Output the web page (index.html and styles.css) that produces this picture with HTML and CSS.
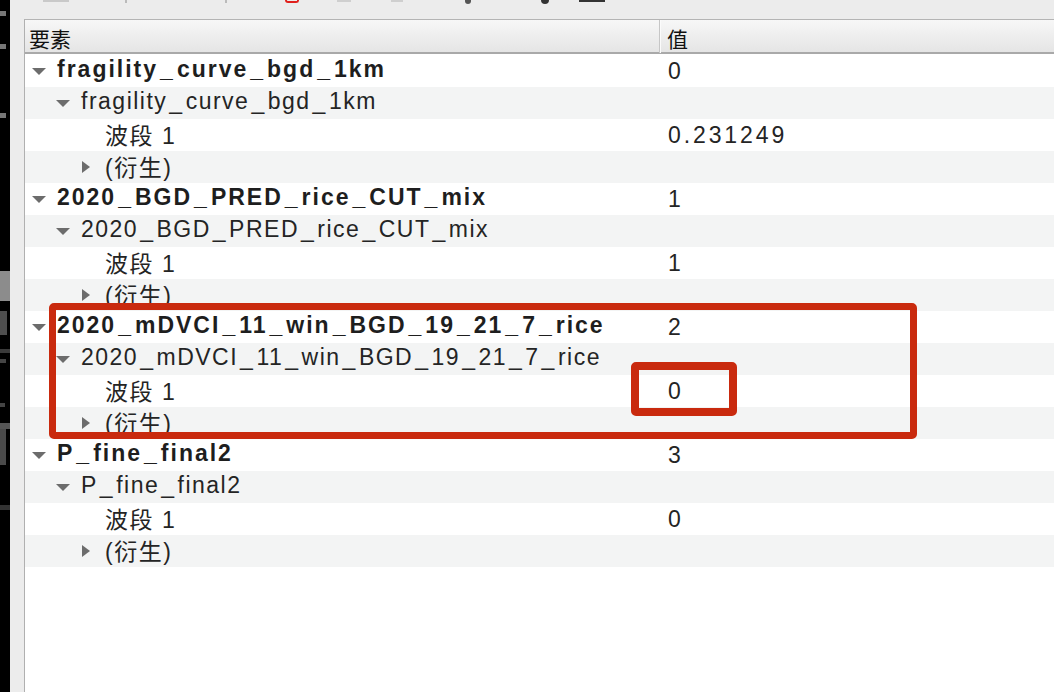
FILE: index.html
```html
<!DOCTYPE html>
<html lang="zh">
<head>
<meta charset="utf-8">
<title>图层信息</title>
<link rel="stylesheet" href="styles.css">
</head>
<body>
<div class="screen">
  <div class="strip">
    <i class="mk m1"></i><i class="mk m2"></i><i class="mk m3"></i><i class="mk m4"></i><i class="mk m5"></i><i class="mk m6"></i><i class="mk m7"></i><i class="mk m8"></i><i class="mk m9"></i><i class="mk m10"></i><i class="mk m11"></i>
  </div>
  <div class="panel">
    <div class="toolbar">
      <i class="stub s1"></i><i class="stub s2"></i><i class="stub s3"></i><i class="stub s4"></i><i class="stub s5"></i><i class="stub s6"></i><i class="stub s7"></i><i class="stub s8"></i><i class="stub s9"></i>
    </div>
    <div class="tree">
      <div class="header">
        <div class="hcell hname">要素</div>
        <div class="hcell hval">值</div>
      </div>
      <div class="rows">
        <div class="row"><div class="name l0"><span class="tg down"></span><span class="lbl b">fragility<span class="us">_</span>curve<span class="us">_</span>bgd<span class="us">_</span>1km</span></div><div class="val">0</div></div>
        <div class="row"><div class="name l1"><span class="tg down"></span><span class="lbl">fragility<span class="us">_</span>curve<span class="us">_</span>bgd<span class="us">_</span>1km</span></div><div class="val"></div></div>
        <div class="row"><div class="name l2"><span class="tg"></span><span class="lbl">波段 1</span></div><div class="val">0.231249</div></div>
        <div class="row"><div class="name l2"><span class="tg right"></span><span class="lbl">(衍生)</span></div><div class="val"></div></div>
        <div class="row"><div class="name l0"><span class="tg down"></span><span class="lbl b">2020<span class="us">_</span>BGD<span class="us">_</span>PRED<span class="us">_</span>rice<span class="us">_</span>CUT<span class="us">_</span>mix</span></div><div class="val">1</div></div>
        <div class="row"><div class="name l1"><span class="tg down"></span><span class="lbl">2020<span class="us">_</span>BGD<span class="us">_</span>PRED<span class="us">_</span>rice<span class="us">_</span>CUT<span class="us">_</span>mix</span></div><div class="val"></div></div>
        <div class="row"><div class="name l2"><span class="tg"></span><span class="lbl">波段 1</span></div><div class="val">1</div></div>
        <div class="row"><div class="name l2"><span class="tg right"></span><span class="lbl">(衍生)</span></div><div class="val"></div></div>
        <div class="row"><div class="name l0"><span class="tg down"></span><span class="lbl b">2020<span class="us">_</span>mDVCI<span class="us">_</span>11<span class="us">_</span>win<span class="us">_</span>BGD<span class="us">_</span>19<span class="us">_</span>21<span class="us">_</span>7<span class="us">_</span>rice</span></div><div class="val">2</div></div>
        <div class="row"><div class="name l1"><span class="tg down"></span><span class="lbl">2020<span class="us">_</span>mDVCI<span class="us">_</span>11<span class="us">_</span>win<span class="us">_</span>BGD<span class="us">_</span>19<span class="us">_</span>21<span class="us">_</span>7<span class="us">_</span>rice</span></div><div class="val"></div></div>
        <div class="row"><div class="name l2"><span class="tg"></span><span class="lbl">波段 1</span></div><div class="val">0</div></div>
        <div class="row"><div class="name l2"><span class="tg right"></span><span class="lbl">(衍生)</span></div><div class="val"></div></div>
        <div class="row"><div class="name l0"><span class="tg down"></span><span class="lbl b">P<span class="us">_</span>fine<span class="us">_</span>final2</span></div><div class="val">3</div></div>
        <div class="row"><div class="name l1"><span class="tg down"></span><span class="lbl">P<span class="us">_</span>fine<span class="us">_</span>final2</span></div><div class="val"></div></div>
        <div class="row"><div class="name l2"><span class="tg"></span><span class="lbl">波段 1</span></div><div class="val">0</div></div>
        <div class="row"><div class="name l2"><span class="tg right"></span><span class="lbl">(衍生)</span></div><div class="val"></div></div>
      </div>
    </div>
  </div>
  <div class="mark-box box-big"></div>
  <div class="mark-box box-small"></div>
</div>
</body>
</html>
```
FILE: styles.css
```css
* { box-sizing: border-box; }
html, body { margin: 0; padding: 0; }
body {
  width: 1054px;
  height: 692px;
  overflow: hidden;
  background: #ececec;
  font-family: "Liberation Sans", "Noto Sans CJK SC", sans-serif;
}
.screen {
  position: relative;
  display: flex;
  width: 1054px;
  height: 692px;
}
.strip {
  width: 10px;
  flex: none;
  background: #000;
  display: flex;
  flex-direction: column;
}
.mk { display: block; background: #666; }
.m1 { margin-top: 11px; width: 6px; height: 5px; background: #777; }
.m2 { margin-top: 28px; width: 6px; height: 5px; background: #777; }
.m3 { margin-top: 64px; width: 6px; height: 5px; background: #777; }
.m4 { margin-top: 153px; width: 10px; height: 30px; background: #8c8c8c; }
.m5 { margin-top: 10px; width: 7px; height: 24px; background: #4e4e4e; }
.m6 { margin-top: 14px; width: 10px; height: 4px; background: #3a3a3a; }
.m7 { margin-top: 6px; width: 6px; height: 4px; background: #444; }
.m8 { margin-top: 40px; width: 5px; height: 4px; background: #444; }
.m9 { margin-top: 16px; width: 10px; height: 6px; background: #555; }
.m10 { margin-top: 0; width: 6px; height: 36px; background: #4a4a4a; }
.m11 { margin-top: 40px; width: 10px; height: 5px; background: #333; }

.panel {
  flex: 1;
  display: flex;
  flex-direction: column;
  padding-left: 14px;
  background: #ececec;
}
.toolbar {
  height: 19px;
  flex: none;
  display: flex;
  align-items: flex-start;
}
.stub { display: block; height: 2px; background: #c9c9c9; }
.s1 { margin-left: 19px; width: 26px; }
.s2 { margin-left: 56px; width: 2px; height: 3px; background: #bbb; }
.s3 { margin-left: 98px; width: 2px; height: 3px; background: #bbb; }
.s4 { margin-left: 58px; width: 14px; height: 3px; background: transparent; border: 2px solid #e0201c; border-top: none; border-radius: 0 0 6px 6px; }
.s5 { margin-left: 38px; width: 14px; background: #cfcfcf; }
.s6 { margin-left: 40px; width: 12px; background: #cfcfcf; }
.s7 { margin-left: 62px; width: 6px; height: 4px; background: #555; border-radius: 0 0 3px 3px; }
.s8 { margin-left: 70px; width: 8px; height: 4px; background: #333; border-radius: 0 0 4px 4px; }
.s9 { margin-left: 30px; width: 26px; height: 2px; background: #333; }

.tree {
  flex: 1;
  background: #fff;
  border-top: 1px solid #b4b4b4;
  border-left: 1px solid #b0b0b0;
  display: flex;
  flex-direction: column;
}
.header {
  height: 34px;
  flex: none;
  display: grid;
  grid-template-columns: 635px 1fr;
  background: linear-gradient(#f7f7f7, #e5e5e5);
  border-bottom: 2px solid #a9a9a9;
}
.hcell {
  font-family: "Noto Sans CJK SC", sans-serif;
  font-size: 21px;
  color: #111;
  display: flex;
  align-items: center;
  padding-top: 3px;
}
.hname {
  padding-left: 4px;
  border-right: 1px solid #c6c6c6;
  box-shadow: 1px 0 0 #fbfbfb;
}
.hval { padding-left: 7px; }

.rows {
  padding-top: 1px;
}
.row {
  height: 32px;
  display: grid;
  grid-template-columns: 635px 1fr;
  align-items: center;
  font-size: 23px;
  letter-spacing: 1.5px;
  color: #242424;
}
.row:nth-child(even) { background: #f3f4f4; }
.name {
  display: flex;
  align-items: center;
  white-space: nowrap;
  height: 32px;
}
.l1 { padding-left: 24px; }
.l2 { padding-left: 48px; }
.tg {
  width: 28px;
  height: 32px;
  flex: none;
  display: flex;
  align-items: center;
  justify-content: center;
}
.tg.down::before {
  content: "";
  border-left: 7px solid transparent;
  border-right: 7px solid transparent;
  border-top: 7px solid #6c6c6c;
}
.tg.right::before {
  content: "";
  margin-left: -2px;
  border-top: 6.5px solid transparent;
  border-bottom: 6.5px solid transparent;
  border-left: 8px solid #6c6c6c;
}
.lbl {
  margin-left: 4px;
  margin-top: -3px;
}
.us { padding: 0 2px; }
.lbl.b { font-weight: bold; color: #1e1e1e; letter-spacing: 2px; }
.val {
  padding-left: 8px;
  margin-top: 0;
  letter-spacing: 2.9px;
}

.mark-box {
  position: absolute;
  border-style: solid;
  border-color: #c92a0e;
  border-radius: 5px;
}
.box-big {
  left: 49px;
  top: 303px;
  width: 868px;
  height: 136px;
  border-width: 7px;
}
.box-small {
  left: 631px;
  top: 362px;
  width: 106px;
  height: 54px;
  border-width: 8px;
}
```
